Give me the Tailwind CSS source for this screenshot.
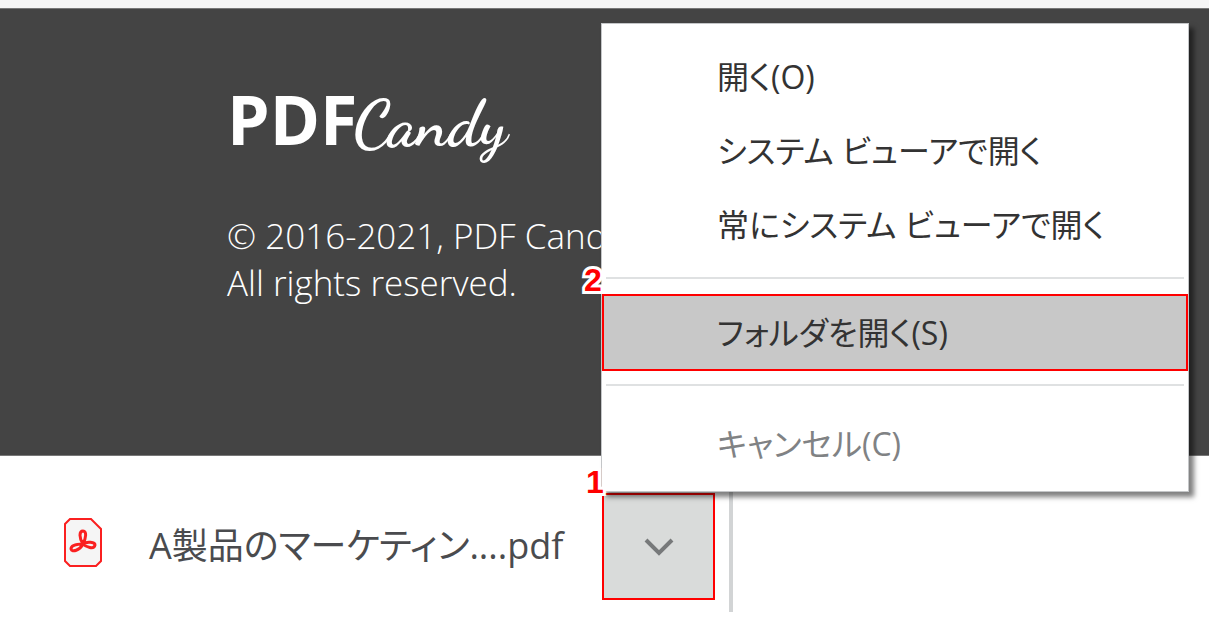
<!DOCTYPE html>
<html lang="ja">
<head>
    <meta charset="UTF-8">
    <meta name="viewport" content="width=device-width, initial-scale=1.0">
    <title>PDF Candy</title>
    <script src="https://cdn.jsdelivr.net/npm/@tailwindcss/browser@4"></script>
</head>
<body class="min-h-screen flex flex-col bg-white font-['Open_Sans','Noto_Sans_CJK_JP',sans-serif]">

    <!-- Page edge -->
    <div class="h-2 bg-[#f5f5f5]"></div>

    <!-- Footer -->
    <footer class="h-[448px] border-y border-[#777777] bg-[#444444] pl-[227px] pt-[70px] text-white">
        <a href="#" class="flex items-baseline h-[90px] leading-[80px]">
            <span class="text-[68px] font-bold">PDF</span>
            <span class="-ml-1 font-['Dancing_Script',cursive] text-[66px] font-bold">Candy</span>
        </a>
        <p class="mt-[43px] text-[35px] leading-[47px] font-light">© 2016-2021, PDF Candy<br>All rights reserved.</p>
    </footer>

    <!-- Download bar -->
    <div class="flex items-start pt-9 pb-4">
        <a href="#" class="flex w-[602px] h-[108px] items-center pl-16 text-[#4a4b4e]">
            <svg class="mb-2 w-[38px] h-[49px] shrink-0" viewBox="0 0 38 49" fill="none" stroke="#fa2020" stroke-width="2">
                <path d="M6 1H27L37 11V43L32 48H6L1 43V6Z" fill="#f5f5f5"/>
                <path d="M19 26C15 20 15 13 19 13C23 13 22 20 19 26ZM19 26C16 32 8 35 7 31C7 27 14 26 19 26ZM19 26C23 23 31 24 31 27C30 32 22 29 19 26Z" stroke-width="3" stroke-linejoin="round"/>
            </svg>
            <span class="ml-[47px] whitespace-nowrap text-[36px] leading-[48px] [font-feature-settings:'palt']">A製品のマーケティン....pdf</span>
        </a>

        <div class="relative pt-px">
            <button aria-label="メニュー" class="flex w-[113px] h-[107px] items-center justify-center border-2 border-[#ff0000] bg-[#d9dbda]">
                <svg class="w-8 h-6" viewBox="0 0 32 24" fill="none" stroke="#77797a" stroke-width="4">
                    <path d="M3 5L16 18L29 5"/>
                </svg>
            </button>

            <!-- Context menu -->
            <div class="absolute bottom-full -left-px w-[588px] border border-[#c4c6c8] bg-white pt-4 pb-[11px] text-[32px] leading-[48px] text-[#333333] shadow-[5px_5px_5px_rgba(0,0,0,0.5)] [font-feature-settings:'palt']">
                <button class="block w-full h-[74px] pl-[115px] text-left">開く(O)</button>
                <button class="block w-full h-[74px] pl-[115px] text-left">システム ビューアで開く</button>
                <button class="block w-full h-[74px] pl-[115px] text-left">常にシステム ビューアで開く</button>
                <hr class="mx-1 mt-[15px] mb-[15px] border-t-2 border-[#dfe1e2]">
                <button class="block w-full h-[77px] border-2 border-[#ff0000] bg-[#c8c8c8] pl-[113px] text-left">フォルダを開く(S)</button>
                <hr class="mx-1 mt-[13px] mb-5 border-t-2 border-[#dfe1e2]">
                <button class="block w-full h-[74px] pl-[115px] pt-px text-left text-[#808284]">キャンセル(C)</button>
            </div>

            <!-- Step numbers -->
            <span class="absolute -left-4 -top-[26px] font-['Liberation_Sans',sans-serif] text-[32px] leading-8 font-bold text-[#ff0000] [-webkit-text-stroke:6px_white] [paint-order:stroke_fill]">1</span>
            <span class="absolute -left-[18px] -top-[228px] font-['Liberation_Sans',sans-serif] text-[32px] leading-8 font-bold text-[#ff0000] [-webkit-text-stroke:6px_white] [paint-order:stroke_fill]">2</span>
        </div>

        <div class="ml-[14px] w-1 h-[120px] bg-[#d2d4d5]"></div>
    </div>

</body>
</html>
